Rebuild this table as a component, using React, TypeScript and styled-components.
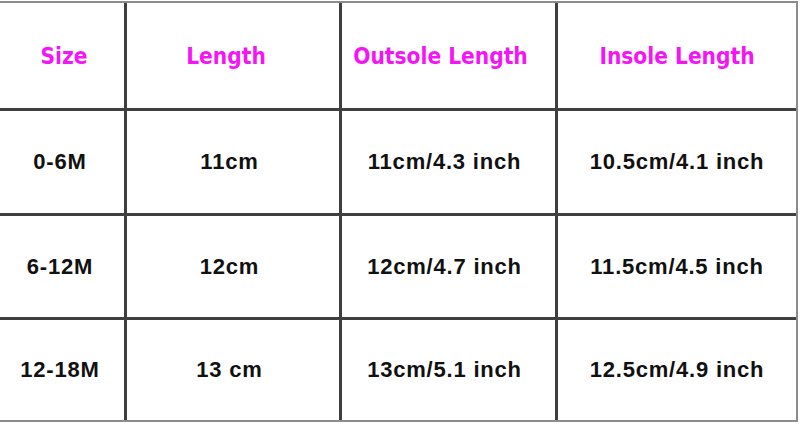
import styled, { createGlobalStyle } from "styled-components";

const Global = createGlobalStyle`
  html, body {
    margin: 0;
    padding: 0;
    background: #fff;
  }
`;

const Grid = styled.div`
  display: grid;
  grid-template-columns: 124px 212px 213px 238px;
  grid-template-rows: 105px 102px 101px 100px;
  gap: 3px;

  width: max-content;
  margin: 1px 0 0 -2px;
  border: 2px solid #8c8c8c;
  background: #3f3f3f;
`;

// the original does not centre its text exactly: $shift > 0 nudges it left, < 0 right
const Cell = styled.div<{ $head?: boolean; $shift?: number }>`
  display: flex;
  align-items: center;
  justify-content: center;
  padding-right: ${(p) => Math.max(p.$shift ?? 0, 0)}px;
  padding-left: ${(p) => Math.max(-(p.$shift ?? 0), 0)}px;

  background: #fff;
  color: ${(p) => (p.$head ? "#f514f5" : "#111")};
  font-family: ${(p) =>
    p.$head
      ? '"DejaVu Sans Condensed", "DejaVu Sans", sans-serif'
      : '"Liberation Sans", Arial, sans-serif'};
  font-size: 22.5px;
  font-size: ${(p) => (p.$head ? "22.5px" : "22px")};
  font-weight: bold;
  letter-spacing: ${(p) => (p.$head ? "0" : "0.8px")};
  white-space: nowrap;
`;

const headShifts = [-4, 14, 16, 0];
const bodyShifts = [4, 7, 8, 0];

const head = ["Size", "Length", "Outsole Length", "Insole Length"];

const rows = [
  ["0-6M", "11cm", "11cm/4.3 inch", "10.5cm/4.1 inch"],
  ["6-12M", "12cm", "12cm/4.7 inch", "11.5cm/4.5 inch"],
  ["12-18M", "13 cm", "13cm/5.1 inch", "12.5cm/4.9 inch"],
];

export default function App() {
  return (
    <>
      <Global />
      <Grid>
        {head.map((h, i) => (
          <Cell key={h} $head $shift={headShifts[i]}>
            {h}
          </Cell>
        ))}
        {rows.map((r) =>
          r.map((c, i) => (
            <Cell key={r[0] + i} $shift={bodyShifts[i]}>
              {c}
            </Cell>
          ))
        )}
      </Grid>
    </>
  );
}
